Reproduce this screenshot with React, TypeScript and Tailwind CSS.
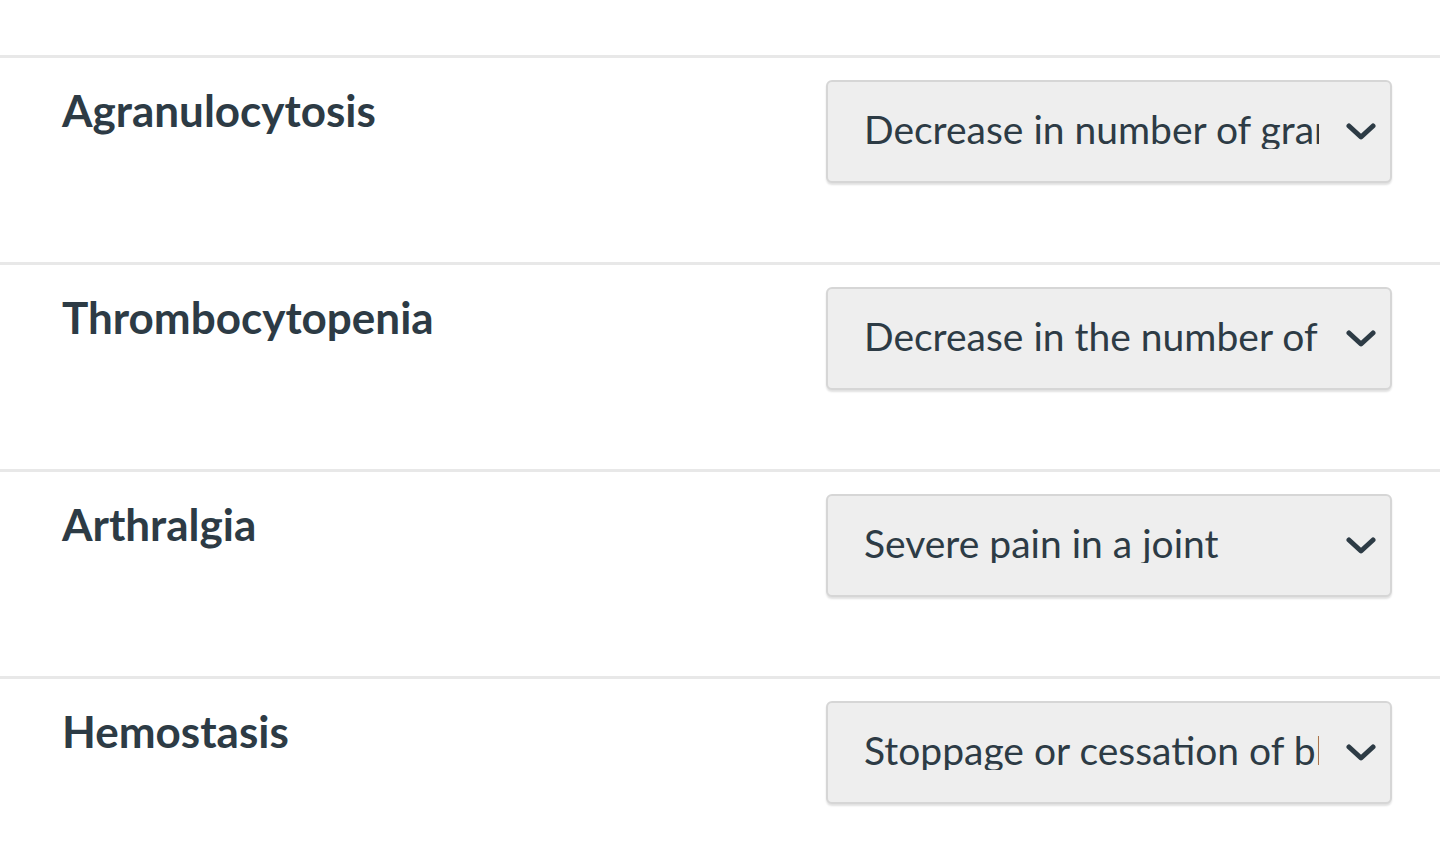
import React from 'react';

const rows = [
  { term: 'Agranulocytosis', answer: 'Decrease in number of granulocytes (white blood cells)' },
  { term: 'Thrombocytopenia', answer: 'Decrease in the number of platelets' },
  { term: 'Arthralgia', answer: 'Severe pain in a joint' },
  { term: 'Hemostasis', answer: 'Stoppage or cessation of bleeding' },
];

const Chevron = () => (
  <svg width="30" height="18" viewBox="0 0 30 18" fill="none" className="shrink-0">
    <polyline points="3,3 15,14 27,3" stroke="#2d3b45" strokeWidth="5" strokeLinecap="round" strokeLinejoin="round" />
  </svg>
);

const App: React.FC = () => {
  return (
    <div className="min-h-screen bg-white pt-[55px] font-['Lato',sans-serif] text-[#2d3b45]">
      {rows.map((row) => (
        <div
          key={row.term}
          className="flex h-[207px] justify-between border-t-[3px] border-[#e8e8e8] pl-[62px] pr-[48px]"
        >
          <h3 className="pt-[30px] text-[44px] font-bold leading-none">{row.term}</h3>
          <div className="mt-[22px] flex h-[103px] w-[566px] items-center rounded-[6px] border-2 border-[#d6d6d6] bg-[#eeeeee] pb-[4px] pl-[36px] pr-[14px] shadow-[0_2px_2px_rgba(0,0,0,0.12)]">
            <span className="w-[455px] overflow-hidden whitespace-nowrap text-[39px] leading-none">
              {row.answer}
            </span>
            <span className="ml-auto pt-[4px]">
              <Chevron />
            </span>
          </div>
        </div>
      ))}
    </div>
  );
};

export default App;
